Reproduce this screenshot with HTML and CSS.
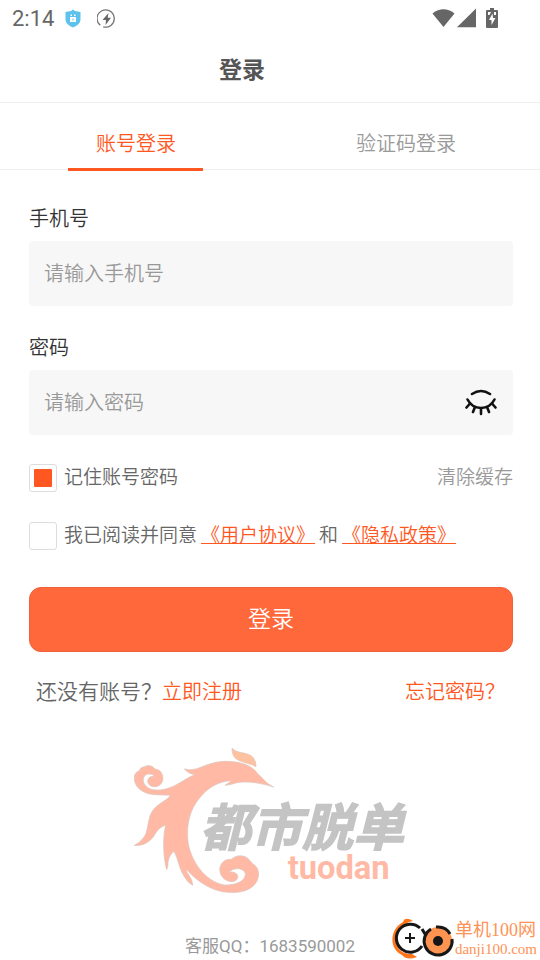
FILE: index.html
```html
<!DOCTYPE html>
<html lang="zh-Hans">
<head>
  <meta charset="UTF-8">
  <meta name="viewport" content="width=device-width, initial-scale=1">
  <title>登录</title>
  <link rel="stylesheet" href="styles.css">
</head>
<body>
  <div class="status-bar">
    <span class="time">2:14</span>
    <svg class="shield" width="16" height="19" viewBox="0 0 16 19">
      <path d="M8 0.5 L10 2 L15.5 3 V11 Q15 16 8 18.5 Q1 16 0.5 11 V3 L6 2 Z" fill="#5ec3ec"/>
      <path d="M5 8h6v5H5zM5.5 5.5h1.5v1.5H5.5zM9 5.5h1.5v1.5H9z" fill="#fff"/>
      <path d="M7.5 9.5h1v2h-1z" fill="#5ec3ec"/>
    </svg>
    <svg class="charge" width="20" height="20" viewBox="0 0 20 20">
      <path d="M3.3 16.3 A8.6 8.6 0 1 1 6.2 17.8" fill="none" stroke="#777" stroke-width="1.3"/>
      <path d="M11.5 4 L5.5 11 H9 L8.5 16 L14 8.8 H10.7 Z" fill="#666"/>
    </svg>
    <div class="status-right">
      <svg width="23" height="20" viewBox="0 0 24 20">
        <path d="M0.5 5.2 Q12 -3.5 23.5 5.2 L12 19.3 Z" fill="#666"/>
      </svg>
      <svg width="19" height="20" viewBox="0 0 19 20">
        <path d="M0 19.3 L19 0.5 V19.3 Z" fill="#666"/>
      </svg>
      <svg class="battery" width="12" height="20" viewBox="0 0 12 20">
        <path d="M4 0h4v2h3q1 0 1 1v16q0 1-1 1H1q-1 0-1-1V3q0-1 1-1h3z" fill="#666"/>
        <path d="M2 4h3L3.5 7H2zM8 4h2v3H8zM6.5 5.5 L3 12 H5.5 V17 L9.5 10 H7 Z" fill="#fff"/>
      </svg>
    </div>
  </div>

  <header class="header">
    <h1>登录</h1>
  </header>

  <nav class="tabs">
    <button type="button" class="tab active">账号登录</button>
    <button type="button" class="tab">验证码登录</button>
  </nav>

  <form class="login-form">
    <label class="field-label" for="phone">手机号</label>
    <div class="field">
      <input type="tel" id="phone" placeholder="请输入手机号">
    </div>

    <label class="field-label" for="password">密码</label>
    <div class="field">
      <input type="password" id="password" placeholder="请输入密码">
      <button type="button" class="eye" aria-label="显示密码">
        <svg width="32" height="28" viewBox="0 0 32 28" fill="none" stroke="#111" stroke-width="2.6" stroke-linecap="round">
          <path d="M7 5 Q16 -1 25 5"/>
          <path d="M2.5 10.5 Q7 19 16 19 Q25 19 29.5 10.5"/>
          <path d="M5 14.5 L1.5 18.5M10 18 L8 23M16 19.5 V25M22 18 L24 23M27 14.5 L30.5 18.5"/>
        </svg>
      </button>
    </div>

    <div class="row">
      <input type="checkbox" class="check" id="remember" checked>
      <label for="remember">记住账号密码</label>
      <button type="button" class="clear">清除缓存</button>
    </div>
    <div class="row">
      <input type="checkbox" class="check" id="agree">
      <label for="agree">我已阅读并同意</label>
      <a href="#">《用户协议》</a>
      <span>和</span>
      <a href="#">《隐私政策》</a>
    </div>

    <button type="submit" class="submit">登录</button>

    <div class="links">
      <span>还没有账号？</span>
      <a href="#">立即注册</a>
      <a href="#" class="forgot">忘记密码？</a>
    </div>
  </form>

  <footer class="footer">
    <svg class="logo" width="300" height="170" viewBox="0 0 900 510">
      <g fill="#ffb9a5" stroke="#d9c5c0" stroke-width="2">
        <!-- 凤冠 -->
        <path d="M336 39 C350 58 382 48 400 68 Q409 80 408 95 C390 84 356 83 342 65 Q335 55 336 39 Z" fill="#ffc2a0"/>
        <!-- 身体、尾羽和祥云 -->
        <path d="M461 156 C438 146 428 128 412 115 C398 92 360 78 315 79 C280 80 252 93 231 101 Q212 107 193 102 Q204 116 224 119 C190 133 173 153 133 163 C108 168 84 165 73 147 C65 131 73 118 86 117 Q98 116 104 124 Q86 122 83 137 C84 151 95 156 107 155 C123 153 133 137 127 119 Q121 103 105 102 Q92 86 73 95 Q60 97 57 108 Q41 112 43 135 C47 162 75 178 105 179 Q130 180 152 181 C136 201 104 208 91 240 C82 265 84 292 70 309 Q60 323 43 331 C73 335 97 315 107 294 Q117 277 137 270 C128 306 129 367 140 404 Q145 398 144 382 Q148 359 162 349 C174 371 177 399 190 420 Q202 443 218 451 Q218 435 206 419 Q198 410 199 403 C222 429 249 450 282 463 C319 477 371 477 397 455 C419 438 422 406 404 390 C393 386 391 371 373 364 Q350 358 334 373 C310 370 294 393 301 414 C307 437 336 447 350 434 C360 420 347 409 328 411 C341 396 370 398 376 415 C378 437 350 451 314 450 C254 440 212 376 204 320 C198 266 211 224 237 191 C261 161 292 139 334 137 Q323 146 315 151 Q332 150 347 144 C379 136 425 145 461 156 Z"/>
      </g>
      <text class="logo-name" x="240" y="332">都市脱单</text>
      <text class="logo-latin" x="503" y="431">tuodan</text>
    </svg>
    <p class="service">客服QQ：1683590002</p>
  </footer>

  <div class="site-mark">
    <svg width="64" height="44" viewBox="0 0 64 44">
      <path d="M22 4 Q14 -1 12 5 C-2 13 -2 32 11 38 Q16 44 26 40 L21 37 C4 38 -1 18 12 9 Q16 5 22 4Z" fill="#ff7519"/>
      <path d="M29 11 A14 14 0 1 0 31 29" fill="none" stroke="#171717" stroke-width="3"/>
      <path d="M14 21h10M19 16v10" stroke="#171717" stroke-width="2"/>
      <circle cx="47" cy="24" r="14" fill="#ff9450"/>
      <path d="M40 12 A14 14 0 1 0 61 22 M45 10 Q55 9 59 17M31 12 L34 17" fill="none" stroke="#171717" stroke-width="3"/>
      <circle cx="47" cy="24" r="5" fill="#171717"/>
    </svg>
    <div class="site-text">
      <span>单机100网</span>
      <span class="site-url">danji100.com</span>
    </div>
  </div>
</body>
</html>
```
FILE: styles.css
```css
* {
  box-sizing: border-box;
}

body {
  margin: 0;
  min-height: 100vh;
  position: relative;
  display: flex;
  flex-direction: column;
  background: #fff;
  color: #666;
  font-family: Roboto, "Noto Sans CJK SC", sans-serif;
  font-size: 19px;
}

button {
  padding: 0;
  border: none;
  background: none;
  color: inherit;
  font: inherit;
}

svg {
  display: block;
}

a {
  color: #ff5722;
}

.status-bar {
  height: 37px;
  padding: 0 42px 0 12px;
  display: flex;
  align-items: center;
}

.time {
  font-size: 22px;
}

.shield {
  margin-left: 11px;
}

.charge {
  margin-left: 16px;
}

.status-right {
  margin-left: auto;
  padding-bottom: 2px;
  display: flex;
  gap: 2px;
}

.battery {
  margin-left: 8px;
}

.header {
  height: 66px;
  padding: 2px 56px 0 0;
  display: flex;
  align-items: center;
  justify-content: center;
  border-bottom: 1px solid #eee;
}

.header h1 {
  margin: 0;
  color: #555;
  font-size: 23px;
  line-height: 30px;
}

.tabs {
  height: 67px;
  display: flex;
  border-bottom: 1px solid #eee;
}

.tab {
  flex: 1;
  position: relative;
  padding: 12px 0 0 2px;
  color: #999;
  font-size: 20px;
  font-weight: 350;
}

.tab.active {
  color: #ff5722;
}

.tab.active::after {
  content: "";
  position: absolute;
  left: 25%;
  bottom: -2px;
  width: 50%;
  height: 3px;
  background: #ff5722;
}

.login-form {
  padding: 34px 27px 0 29px;
  display: flex;
  flex-direction: column;
  font-weight: 350;
}

.field-label {
  margin-bottom: 7px;
  color: #333;
  font-size: 20px;
  line-height: 30px;
}

.field {
  height: 65px;
  margin-bottom: 27px;
  padding: 0 16px 0 15px;
  display: flex;
  align-items: center;
  border-radius: 4px;
  background: #f7f7f7;
}

.field input {
  flex: 1;
  min-width: 0;
  height: 100%;
  padding: 0;
  border: none;
  outline: none;
  background: none;
  color: #333;
  font: inherit;
  font-size: 20px;
}

.field input::placeholder {
  color: #999;
}

.row {
  height: 28px;
  margin: 2px 0 28px;
  display: flex;
  align-items: center;
  gap: 4px;
  line-height: 24px;
}

.check {
  appearance: none;
  width: 28px;
  height: 28px;
  margin: 0 3px 0 0;
  padding: 4px;
  border: 1px solid #ddd;
  border-radius: 3px;
}

.check:checked::before {
  content: "";
  display: block;
  width: 18px;
  height: 18px;
  border-radius: 1px;
  background: #ff5722;
}

.row a {
  text-decoration: underline 1px #ff5722;
  text-underline-offset: 1px;
  text-decoration-skip-ink: none;
}

.clear {
  margin-left: auto;
  color: #999;
}

.submit {
  height: 65px;
  margin-top: 9px;
  padding-bottom: 6px;
  border: 1px solid #f0623a;
  border-radius: 12px;
  background: #ff683b;
  color: #fff;
  font-size: 23px;
}

.links {
  margin-top: 25px;
  padding: 0 8px 0 7px;
  display: flex;
  align-items: baseline;
  font-size: 21px;
  line-height: 30px;
}

.links a {
  font-size: 20px;
  text-decoration: none;
}

.links .forgot {
  margin-left: auto;
}

.footer {
  padding-top: 28px;
  display: flex;
  flex-direction: column;
  align-items: center;
}

.logo-name {
  fill: #c4c4c4;
  stroke: #c4c4c4;
  stroke-width: 4px;
  font-family: "Noto Sans CJK SC", sans-serif;
  font-size: 153px;
  font-style: italic;
  font-weight: 700;
}

.logo-latin {
  fill: #ffb9a5;
  font-size: 98px;
  font-weight: 700;
}

.service {
  margin: 26px 0 0;
  color: #999;
  font-size: 17px;
  line-height: 30px;
}

.site-mark {
  position: absolute;
  right: 3px;
  bottom: 0;
  display: flex;
  align-items: center;
}

.site-text {
  display: flex;
  flex-direction: column;
  color: #ff9254;
  font-family: "Liberation Serif", "Noto Sans CJK SC", serif;
  font-size: 18px;
  line-height: 20px;
}

.site-url {
  font-size: 15px;
  line-height: 18px;
}
```
